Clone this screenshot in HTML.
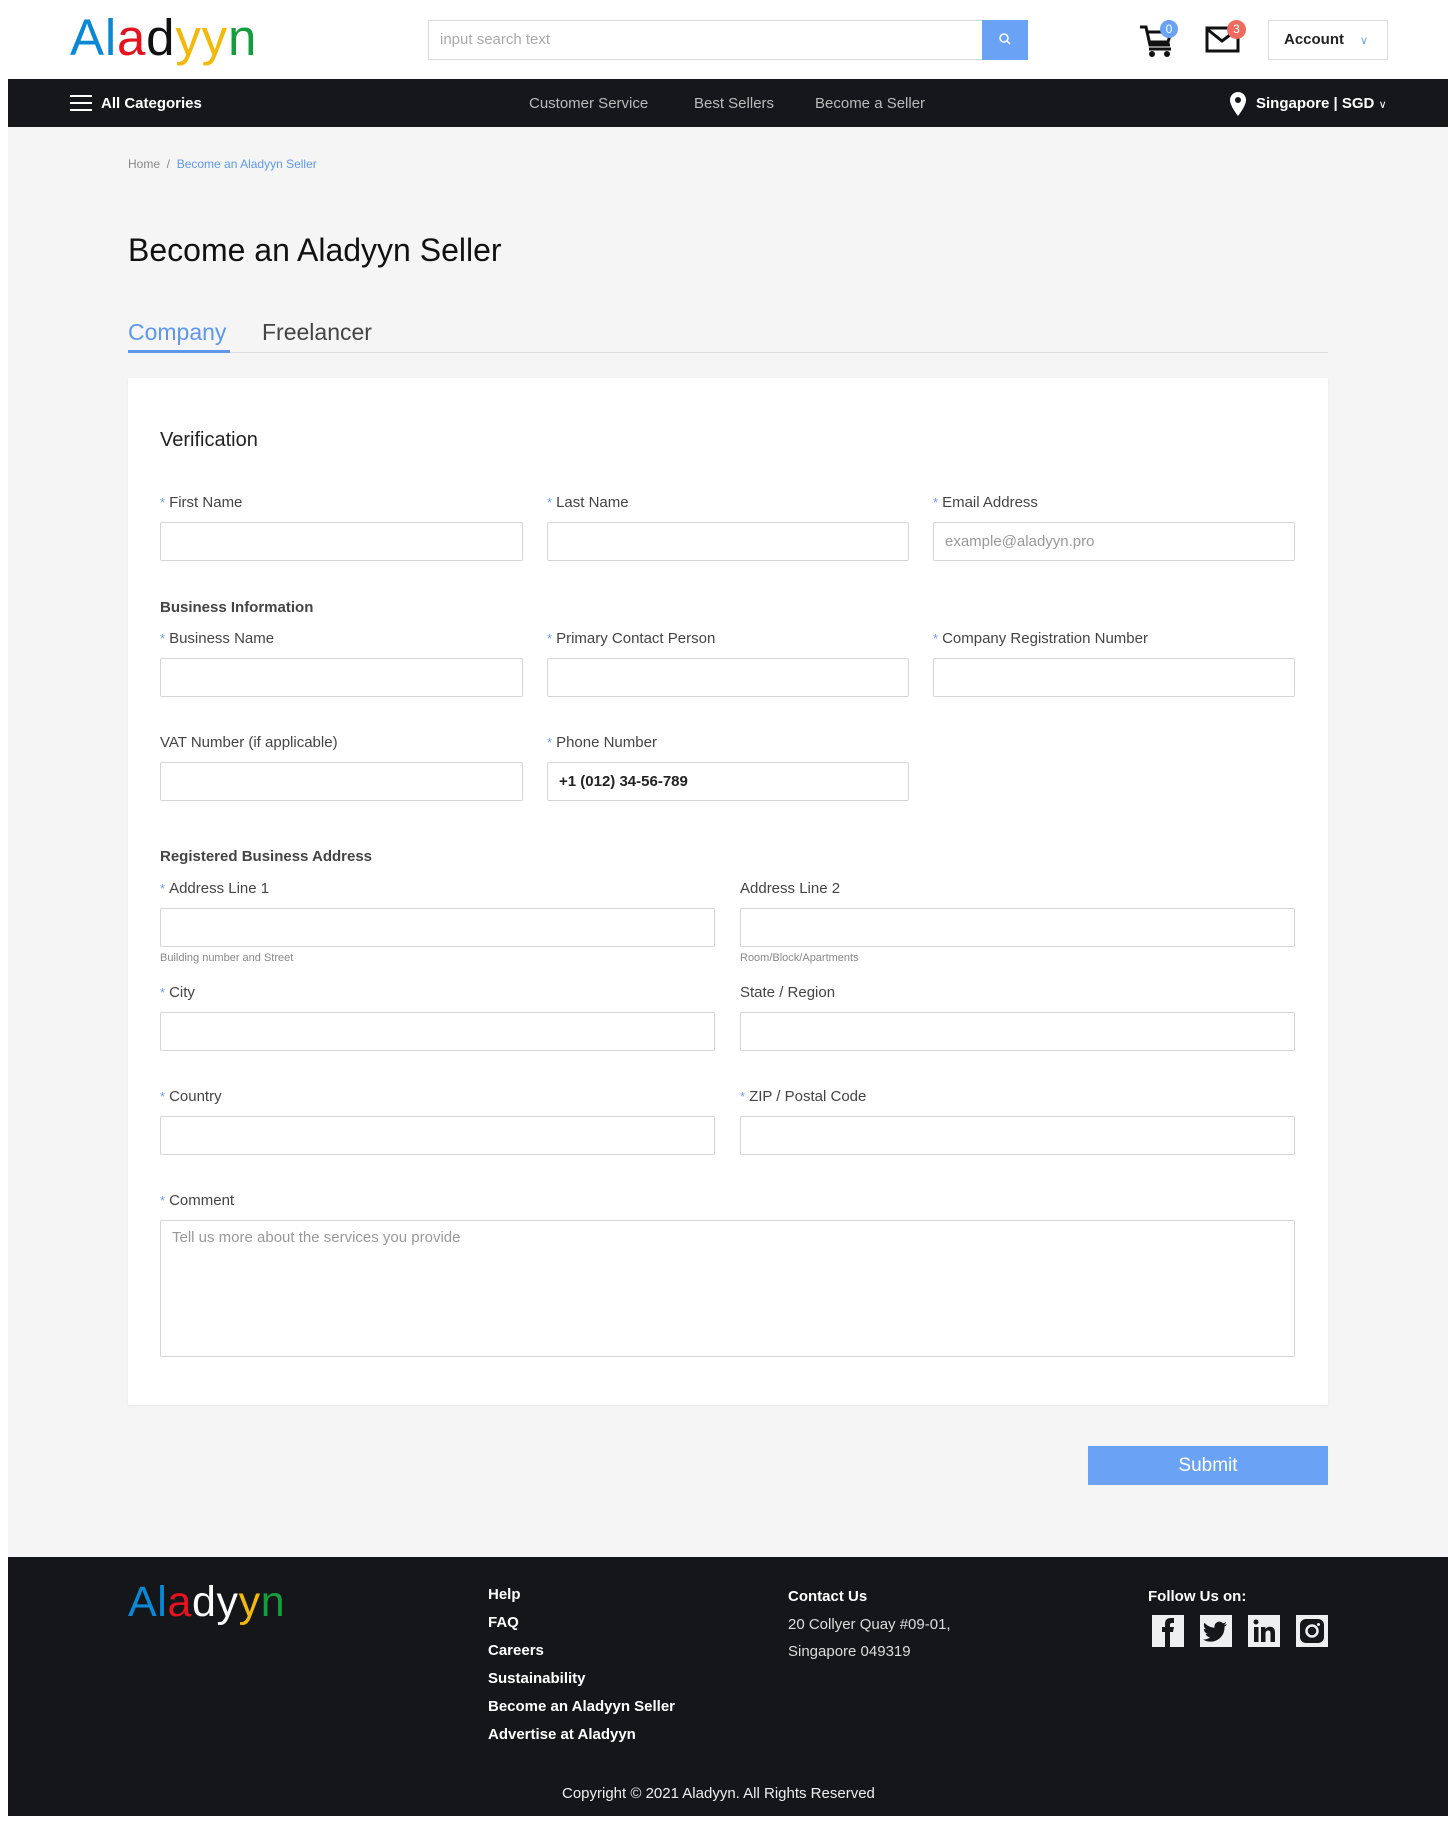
<!DOCTYPE html>
<html><head><meta charset="utf-8">
<style>
*{box-sizing:border-box;margin:0;padding:0}
body{width:1456px;height:1829px;background:#fff;font-family:"Liberation Sans",Arial,sans-serif;color:#333;position:relative;overflow:hidden}
.abs{position:absolute}
.page{position:absolute;left:8px;top:0;width:1440px;height:1816px;background:#f5f5f5}
.hdr{position:absolute;left:0;top:0;width:1440px;height:79px;background:#fff}
.nav{position:absolute;left:0;top:79px;width:1440px;height:48px;background:#15171b;color:#fff;font-size:15px}
.logo{font-size:51px;letter-spacing:0.8px;line-height:1}
.logo span:nth-child(1),.logo span:nth-child(2){color:#0a88d6}
.logo span:nth-child(3){color:#e3141f}
.logo span:nth-child(5){color:#f3b90a}
.logo span:nth-child(6){color:#169c3c}
.lbl{position:absolute;font-size:15px;color:#444}
.lbl b{color:#6a9ef0;font-weight:normal;font-size:13px;margin-right:4px;position:relative;top:0}
.inp{position:absolute;height:39px;border:1px solid #d6d6d6;background:#fff;font-size:15px;padding:0 11px;line-height:37px;border-radius:2px}
.sec{position:absolute;font-size:15px;font-weight:bold;color:#444}
.help{position:absolute;font-size:11px;color:#888}
.foot{position:absolute;left:0;top:1557px;width:1440px;height:259px;background:#14161a;color:#fff}
.fl{position:absolute;font-size:15px;font-weight:bold;color:#fff}
.ic{position:absolute;top:1615px;width:32px;height:32px;background:#eeeff1}
</style></head><body>
<div class="page">
 <div class="hdr">
  <div class="abs logo" style="left:62px;top:12px"><span>A</span><span>l</span><span>a</span><span style="color:#111">d</span><span>y</span><span style="color:#f3b90a">y</span><span style="color:#169c3c">n</span></div>
  <div class="abs" style="left:420px;top:20px;width:555px;height:40px;border:1px solid #d9d9d9;font-size:15px;color:#aaa;line-height:38px;padding-left:11px">input search text</div>
  <div class="abs" style="left:974px;top:20px;width:46px;height:40px;background:#6aa3f5">
   <svg width="46" height="40"><circle cx="22" cy="18" r="4" fill="none" stroke="#fff" stroke-width="1.5"/><line x1="25" y1="21" x2="28" y2="24" stroke="#fff" stroke-width="1.5"/></svg></div>
  <svg class="abs" style="left:1130px;top:22px" width="40" height="36"><path d="M2 5h6l4 18h20" fill="none" stroke="#111" stroke-width="3"/><path d="M9 10h24l-3 10H11" fill="none" stroke="#111" stroke-width="3"/><path d="M11 27h22" stroke="#111" stroke-width="3"/><circle cx="14" cy="32" r="3" fill="#111"/><circle cx="29" cy="32" r="3" fill="#111"/></svg>
  <div class="abs" style="left:1152px;top:20px;width:18px;height:18px;border-radius:50%;background:#6aa3f5;color:#fff;font-size:12px;text-align:center;line-height:18px">0</div>
  <svg class="abs" style="left:1197px;top:26px" width="36" height="28"><rect x="2" y="2" width="31" height="23" fill="none" stroke="#111" stroke-width="3"/><path d="M2 3l15 12 16-12" fill="none" stroke="#111" stroke-width="3"/></svg>
  <div class="abs" style="left:1219px;top:20px;width:19px;height:19px;border-radius:50%;background:#ef6a5f;color:#fff;font-size:12px;text-align:center;line-height:19px">3</div>
  <div class="abs" style="left:1260px;top:20px;width:120px;height:40px;border:1px solid #ddd;font-size:15px;font-weight:bold;color:#222;line-height:38px;padding-left:15px">Account<span style="color:#6aa3f5;font-weight:normal;font-size:11px;margin-left:16px">∨</span></div>
 </div>
 <div class="nav">
  <svg class="abs" style="left:62px;top:15px" width="22" height="18"><path d="M0 2h22M0 9h22M0 16h22" stroke="#fff" stroke-width="2"/></svg>
  <div class="abs" style="left:93px;top:16px;font-weight:bold">All Categories</div>
  <div class="abs" style="left:521px;top:16px;color:#bbb">Customer Service</div>
  <div class="abs" style="left:686px;top:16px;color:#bbb">Best Sellers</div>
  <div class="abs" style="left:807px;top:16px;color:#bbb">Become a Seller</div>
  <svg class="abs" style="left:1222px;top:13px" width="16" height="24"><path d="M8 0a8 8 0 0 1 8 8c0 6-8 16-8 16S0 14 0 8a8 8 0 0 1 8-8z" fill="#fff"/><circle cx="8" cy="8" r="3" fill="#15171b"/></svg>
  <div class="abs" style="left:1248px;top:16px;font-weight:bold">Singapore | SGD <span style="font-weight:normal;font-size:11px">∨</span></div>
 </div>
 <div class="abs" style="left:120px;top:157px;font-size:12px;color:#888">Home &nbsp;/&nbsp; <span style="color:#5f98ea">Become an Aladyyn Seller</span></div>
 <div class="abs" style="left:120px;top:232px;font-size:32px;color:#111">Become an Aladyyn Seller</div>
 <div class="abs" style="left:120px;top:319px;font-size:23px;color:#5f98ea">Company</div>
 <div class="abs" style="left:254px;top:319px;font-size:23px;color:#444">Freelancer</div>
 <div class="abs" style="left:120px;top:352px;width:1200px;height:1px;background:#ddd"></div>
 <div class="abs" style="left:120px;top:350px;width:102px;height:3px;background:#5f98ea"></div>
 <div class="abs" style="left:120px;top:378px;width:1200px;height:1027px;background:#fff;box-shadow:0 1px 3px rgba(0,0,0,.06)"></div>
 <div class="abs" style="left:152px;top:429px;font-size:20px;color:#222">Verification</div>

 <div class="lbl" style="left:152px;top:494px"><b>*</b>First Name</div>
 <div class="lbl" style="left:539px;top:494px"><b>*</b>Last Name</div>
 <div class="lbl" style="left:925px;top:494px"><b>*</b>Email Address</div>
 <div class="inp" style="left:152px;top:522px;width:363px"></div>
 <div class="inp" style="left:539px;top:522px;width:362px"></div>
 <div class="inp" style="left:925px;top:522px;width:362px;color:#999">example@aladyyn.pro</div>

 <div class="sec" style="left:152px;top:599px">Business Information</div>
 <div class="lbl" style="left:152px;top:630px"><b>*</b>Business Name</div>
 <div class="lbl" style="left:539px;top:630px"><b>*</b>Primary Contact Person</div>
 <div class="lbl" style="left:925px;top:630px"><b>*</b>Company Registration Number</div>
 <div class="inp" style="left:152px;top:658px;width:363px"></div>
 <div class="inp" style="left:539px;top:658px;width:362px"></div>
 <div class="inp" style="left:925px;top:658px;width:362px"></div>

 <div class="lbl" style="left:152px;top:734px">VAT Number (if applicable)</div>
 <div class="lbl" style="left:539px;top:734px"><b>*</b>Phone Number</div>
 <div class="inp" style="left:152px;top:762px;width:363px"></div>
 <div class="inp" style="left:539px;top:762px;width:362px;font-weight:bold;color:#222">+1 (012) 34-56-789</div>

 <div class="sec" style="left:152px;top:848px">Registered Business Address</div>
 <div class="lbl" style="left:152px;top:880px"><b>*</b>Address Line 1</div>
 <div class="lbl" style="left:732px;top:880px">Address Line 2</div>
 <div class="inp" style="left:152px;top:908px;width:555px"></div>
 <div class="inp" style="left:732px;top:908px;width:555px"></div>
 <div class="help" style="left:152px;top:952px">Building number and Street</div>
 <div class="help" style="left:732px;top:952px">Room/Block/Apartments</div>

 <div class="lbl" style="left:152px;top:984px"><b>*</b>City</div>
 <div class="lbl" style="left:732px;top:984px">State / Region</div>
 <div class="inp" style="left:152px;top:1012px;width:555px"></div>
 <div class="inp" style="left:732px;top:1012px;width:555px"></div>

 <div class="lbl" style="left:152px;top:1088px"><b>*</b>Country</div>
 <div class="lbl" style="left:732px;top:1088px"><b>*</b>ZIP / Postal Code</div>
 <div class="inp" style="left:152px;top:1116px;width:555px"></div>
 <div class="inp" style="left:732px;top:1116px;width:555px"></div>

 <div class="lbl" style="left:152px;top:1192px"><b>*</b>Comment</div>
 <div class="inp" style="left:152px;top:1220px;width:1135px;height:137px;color:#999;line-height:1;padding-top:9px">Tell us more about the services you provide</div>

 <div class="abs" style="left:1080px;top:1446px;width:240px;height:39px;background:#6aa3f5;color:#fff;font-size:19px;text-align:center;line-height:39px">Submit</div>

 <div class="foot">
  <div class="abs logo" style="left:120px;top:24px;font-size:43px;letter-spacing:0.6px"><span>A</span><span>l</span><span>a</span><span style="color:#fff">d</span><span style="color:#fff">y</span><span style="color:#f3b90a">y</span><span style="color:#169c3c">n</span></div>
  <div class="fl" style="left:480px;top:29px">Help</div>
  <div class="fl" style="left:480px;top:57px">FAQ</div>
  <div class="fl" style="left:480px;top:85px">Careers</div>
  <div class="fl" style="left:480px;top:113px">Sustainability</div>
  <div class="fl" style="left:480px;top:141px">Become an Aladyyn Seller</div>
  <div class="fl" style="left:480px;top:169px">Advertise at Aladyyn</div>
  <div class="fl" style="left:780px;top:31px">Contact Us</div>
  <div class="abs" style="left:780px;top:54px;font-size:15px;color:#ddd;line-height:27px">20 Collyer Quay #09-01,<br>Singapore 049319</div>
  <div class="fl" style="left:1140px;top:31px">Follow Us on:</div>
  <div class="abs" style="left:554px;top:228px;font-size:15px;color:#eee">Copyright © 2021 Aladyyn. All Rights Reserved</div>
 </div>
</div>
<div class="ic" style="left:1152px"><svg width="32" height="32"><path d="M13 32V17H10v-5h3V9c0-4 2-6 6-6h3v5h-2c-1.5 0-2 .5-2 2v2h4l-1 5h-3v15z" fill="#15171b"/></svg></div>
<div class="ic" style="left:1200px"><svg width="32" height="32"><path d="M27 9c-1 .5-2 .7-3 .8 1-.7 1.8-1.6 2.2-2.8-1 .6-2 1-3.2 1.2a5 5 0 0 0-8.5 4.5C10.300 12.500 6.800 10.600 4.500 7.800c-1.300 2.300-.5 5 1.500 6.500-.8 0-1.600-.3-2.200-.6 0 2.400 1.700 4.500 4 5-.7.2-1.500.2-2.200.1.600 2 2.500 3.400 4.600 3.500A10 10 0 0 1 3 24.500 14 14 0 0 0 24.500 12.200V11.600C25.500 11 26.400 10 27 9z" fill="#15171b"/></svg></div>
<div class="ic" style="left:1248px"><svg width="32" height="32"><circle cx="8" cy="7" r="2.5" fill="#15171b"/><rect x="6" y="12" width="4.5" height="15" fill="#15171b"/><path d="M13 12h4.300v2.200c1-1.600 2.600-2.500 4.700-2.500 3.500 0 5 2.200 5 6V27h-4.500v-8.500c0-2-.7-3-2.300-3s-2.700 1.200-2.700 3.200V27H13z" fill="#15171b"/></svg></div>
<div class="ic" style="left:1296px"><svg width="32" height="32"><rect x="4" y="4" width="24" height="24" rx="6" fill="#15171b"/><circle cx="16" cy="16" r="5.5" fill="none" stroke="#eeeff1" stroke-width="2.5"/><circle cx="22.500" cy="9.500" r="1.500" fill="#eeeff1"/></svg></div>
</body></html>
